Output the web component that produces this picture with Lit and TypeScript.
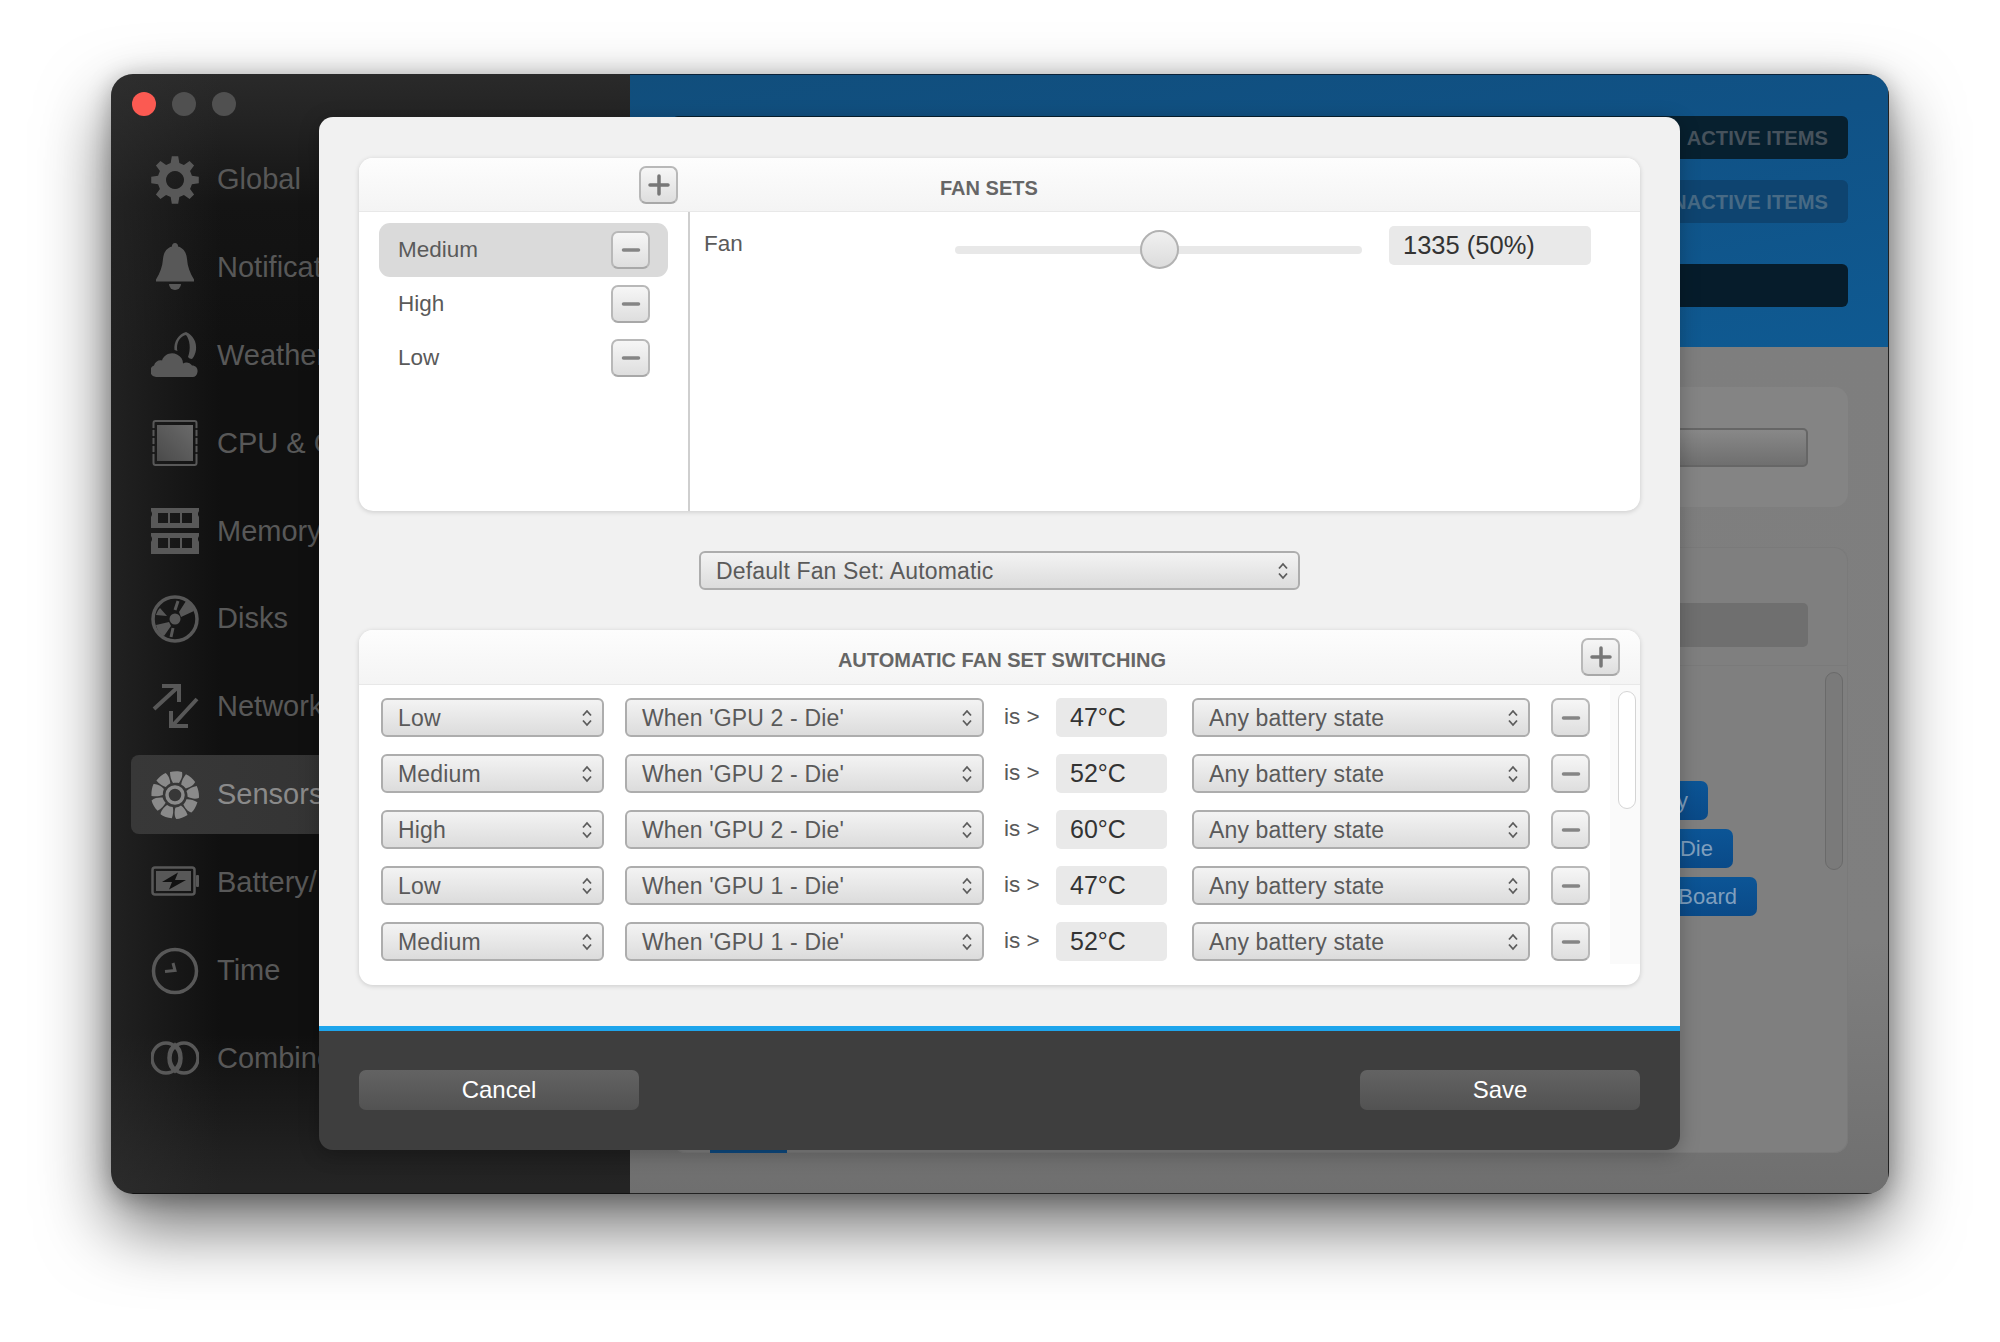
import { LitElement, html, css, svg } from "lit";
import { customElement } from "lit/decorators.js";
import { styleMap } from "lit/directives/style-map.js";

const gearPath = (() => {
  const teeth = 8, cx = 24, cy = 24, ro = 24, ri = 17.5;
  let d = "";
  for (let i = 0; i < teeth; i++) {
    const a = (i / teeth) * Math.PI * 2 - Math.PI / 2;
    const s = (Math.PI * 2) / teeth;
    const pts: [number, number][] = [
      [ri, a - s * 0.32],
      [ro, a - s * 0.17],
      [ro, a + s * 0.17],
      [ri, a + s * 0.32],
    ];
    for (const [r, t] of pts) {
      const x = (cx + r * Math.cos(t)).toFixed(2);
      const y = (cy + r * Math.sin(t)).toFixed(2);
      d += (d ? "L" : "M") + x + " " + y + " ";
    }
  }
  return d + "Z M24 15a9 9 0 1 0 0.01 0Z";
})();

const icons: Record<string, unknown> = {
  gear: svg`<path d=${gearPath} fill="currentColor" fill-rule="evenodd"/>`,
  bell: svg`<path fill="currentColor" d="M24 0a3 3 0 0 1 3 3.400c6 1.600 8.500 6.600 9 12.600.6 8 3 14 7 20.500v2H5v-2c4-6.500 6.400-12.500 7-20.500.5-6 3-11 9-12.600A3 3 0 0 1 24 0Z"/><path fill="currentColor" d="M18 41h12a6 6 0 0 1-12 0Z"/>`,
  weather: svg`<path fill="currentColor" d="M35 1c7 3 11 10 10 18-.5 3-2 7-4 9-2 0-3-1-4-2 3-8 2-17-2-22-5 1-9 6-9 13 0 1 0 2 .5 3l-3-1c-1-8 4-16 11.500-18Z"/><path fill="currentColor" d="M5 46a6 6 0 0 1-2-11.500c1-4 5-6 8-5 2-6 9-9 15-6 4 2 6 5 6 9 3-2 7-1 9 2 4 0 6 3 5.500 6.500S44 46 42 46Z"/>`,
  cpu: svg`<defs><linearGradient id="cg" x1="0" x2="1" y1="1" y2="0"><stop offset="0" stop-color="#4a4a4a"/><stop offset="1" stop-color="#6a6a6a"/></linearGradient></defs><rect x="2.500" y="2" width="43" height="44" rx="2" fill="none" stroke="currentColor" stroke-width="2"/><rect x="6" y="6" width="36" height="36" fill="url(#cg)"/><path stroke="#111" stroke-width="1.500" d="M1 10h3M1 18h3M1 26h3M1 34h3M44 10h3M44 18h3M44 26h3M44 34h3"/>`,
  ram: svg`<g fill="currentColor" fill-rule="evenodd"><path d="M0 1h48v3l-1 2v2l1 2v11H0V10l1-2V6L0 4Zm7 5v10h10V6Zm12 0v10h10V6Zm12 0v10h10V6Z"/><path d="M0 26h48v3l-1 2v2l1 2v12H0V35l1-2v-2l-1-2Zm7 5v10h10V31Zm12 0v10h10V31Zm12 0v10h10V31Z"/></g>`,
  disk: svg`<circle cx="24" cy="24" r="22" fill="none" stroke="currentColor" stroke-width="3.500"/><circle cx="24" cy="24" r="5.500" fill="currentColor"/><path fill="currentColor" d="M28 17l7-11c4 2 7 6 8 10l-13 6ZM20 31l-7 10c-4-2-7-6-8-11l13-3ZM16 21L5 20c1-3 2-5 4-7Z"/><path stroke="currentColor" stroke-width="3" d="M27 6l-3 9M22 33l-2 9"/>`,
  net: svg`<g fill="none" stroke="currentColor" stroke-width="4"><path d="M3 26L27 4M11 3h17v16"/><path d="M46 16L22 42M37 43H20V28"/></g>`,
  fan: svg`<g fill="currentColor">${[0, 1, 2, 3, 4, 5, 6, 7, 8].map(
    (i) =>
      svg`<path transform="rotate(${i * 40} 24 24)" d="M19 1c4-1 9-1 12 0 1 4-1 8-3 11-2-.5-4-.5-6 0-2-3-3-7-3-11Z"/>`
  )}</g><circle cx="24" cy="24" r="8" fill="none" stroke="currentColor" stroke-width="3.500"/>`,
  battery: svg`<rect x="1.500" y="8.500" width="42" height="27" rx="2.500" fill="none" stroke="currentColor" stroke-width="2.500"/><rect x="5" y="12" width="35" height="20" fill="currentColor"/><rect x="45" y="16" width="3" height="12" rx="1" fill="currentColor"/><path fill="#111" d="M27 13.500L11 23h10l-3 7.500L35 21H24Z"/>`,
  clock: svg`<circle cx="24" cy="24" r="21.500" fill="none" stroke="currentColor" stroke-width="3.500"/><path fill="none" stroke="currentColor" stroke-width="3" d="M22 16l2 7.500-10 1"/>`,
  rings: svg`<g fill="none" stroke="currentColor" stroke-width="3.500"><ellipse cx="15" cy="24" rx="14" ry="15"/><ellipse cx="33" cy="24" rx="14" ry="15"/><path d="M25 10c-5 3-7 9-7 14s2 11 7 14M23 10c5 3 7 9 7 14s-2 11-7 14"/></g>`,
};

const chevrons = html`<svg class="chev" viewBox="0 0 12 20" width="12" height="20">
  <path d="M2 7.500L6 3l4 4.500M2 12.500L6 17l4-4.500" fill="none" stroke="#5c5c5c" stroke-width="1.800" />
</svg>`;

const nav = [
  ["Global", "gear"],
  ["Notifications", "bell"],
  ["Weather", "weather"],
  ["CPU & GPU", "cpu"],
  ["Memory", "ram"],
  ["Disks", "disk"],
  ["Network", "net"],
  ["Sensors", "fan"],
  ["Battery/Power", "battery"],
  ["Time", "clock"],
  ["Combined", "rings"],
];

const rules = [
  ["Low", "When 'GPU 2 - Die'", "47°C"],
  ["Medium", "When 'GPU 2 - Die'", "52°C"],
  ["High", "When 'GPU 2 - Die'", "60°C"],
  ["Low", "When 'GPU 1 - Die'", "47°C"],
  ["Medium", "When 'GPU 1 - Die'", "52°C"],
];

const tags = [
  ["Battery", 347],
  ["GPU 2 - Die", 372],
  ["Logic Board", 396],
] as const;

@customElement("app-root")
export class AppRoot extends LitElement {
  static styles = css`
    :host {
      display: block;
      width: 2000px;
      height: 1342px;
      box-sizing: border-box;
      padding: 74px 111px 148px;
      background: #fff;
      font-family: "Liberation Sans", Arial, sans-serif;
      overflow: hidden;
    }
    * { box-sizing: border-box; }
    .window {
      position: relative;
      height: 100%;
      display: flex;
      border-radius: 22px;
      overflow: hidden;
      box-shadow: 0 32px 70px rgba(0,0,0,.58), 0 4px 24px rgba(0,0,0,.28);
    }
    .sidebar {
      width: 519px;
      flex: none;
      background:
        linear-gradient(90deg, rgba(50,50,50,.5) 0, rgba(50,50,50,0) 110px),
        linear-gradient(180deg, #2a2a2a 0, #242424 40px, #141414 130px, #101010 300px, #101010 960px, #242424 1110px);
      padding-top: 18px;
      border-bottom: 1px solid #111;
    }
    .lights { display: flex; gap: 16px; padding-left: 21px; height: 48px; }
    .light { width: 24px; height: 24px; border-radius: 50%; background: #505050; }
    .light.red { background: #fb5a52; }
    .navlist { display: flex; flex-direction: column; gap: 8.900px; }
    .item {
      display: flex;
      align-items: center;
      height: 79px;
      margin-left: 20px;
      padding-left: 20px;
      gap: 18px;
      color: #585858;
      font-size: 29px;
      border-radius: 8px 0 0 8px;
      white-space: nowrap;
      flex: none;
    }
    .item.active { color: #8a8a8a; background: linear-gradient(90deg, #383838, #2e2e2e); }
    .item svg { width: 48px; height: 48px; flex: none; }
    .main {
      flex: 1;
      display: flex;
      flex-direction: column;
      min-width: 0;
      background: #7f7f7f;
      border-top: 1px solid #0b2238;
      border-right: 1px solid #222;
      border-bottom: 1px solid #222;
    }
    .head {
      height: 272px;
      flex: none;
      background: linear-gradient(170deg, #114e7c 0, #105286 50%, #0f5a92 100%);
      padding: 41px 40px 0 42px;
    }
    .seg {
      height: 43px;
      border-radius: 6px;
      background: #07202f;
      color: #46525c;
      font-weight: 700;
      font-size: 20.200px;
      display: flex;
      align-items: center;
      justify-content: flex-end;
      padding: 2px 20px 0 0;
    }
    .seg.off { background: #0e4470; color: #476a85; margin-top: 21px; }
    .seg.bar { background: #061c2b; margin-top: 41px; }
    .content {
      flex: 1;
      display: flex;
      flex-direction: column;
      gap: 40px;
      padding: 40px 40px 40px 42px;
      background: linear-gradient(180deg, #7e7e7e 0, #7f7f7f 70%, #6f6f6f 100%);
    }
    .card {
      height: 120px;
      flex: none;
      background: #848484;
      border-radius: 14px;
      padding: 41px 40px 0;
    }
    .field {
      height: 39px;
      border-radius: 5px;
      border: 2px solid #666;
      background: linear-gradient(180deg, #888, #6f6f6f);
    }
    .card2 {
      flex: 1;
      background: #7f7f7f;
      border-radius: 14px;
      position: relative;
      box-shadow: inset 0 0 0 1px #7a7a7a;
    }
    .card2top { height: 119px; padding: 56px 40px 0; border-bottom: 1px solid #7a7a7a; }
    .field2 { height: 44px; border-radius: 5px; background: #6f6f6f; }
    .taglist { display: flex; flex-direction: column; gap: 9px; margin-top: 115px; }
    .tag {
      height: 39px;
      border-radius: 7px;
      background: linear-gradient(180deg, #0c5596, #0a4a88);
      color: #7f9fbe;
      font-size: 22px;
      display: flex;
      align-items: center;
      justify-content: flex-end;
      padding-right: 20px;
    }
    .thumb {
      position: absolute;
      right: 5px;
      top: 125px;
      width: 18px;
      height: 198px;
      border-radius: 9px;
      border: 1px solid #6a6a6a;
      background: #7a7a7a;
    }
    .tab {
      position: absolute;
      left: 38px;
      bottom: 0;
      width: 77px;
      height: 6px;
      background: #0e4a80;
    }
    /* modal */
    .modal {
      position: absolute;
      left: 208px;
      top: 43px;
      width: 1361px;
      height: 1033px;
      border-radius: 14px;
      overflow: hidden;
      display: flex;
      flex-direction: column;
      box-shadow: 0 4px 20px rgba(0,0,0,.25);
    }
    .mbody {
      height: 909px;
      flex: none;
      background: #f1f1f1;
      padding: 41px 40px 0 40px;
      display: flex;
      flex-direction: column;
    }
    .panel {
      background: #fff;
      border-radius: 14px;
      box-shadow: 0 1px 5px rgba(0,0,0,.16);
      overflow: hidden;
      flex: none;
    }
    .phead {
      display: flex;
      align-items: center;
      height: 54px;
      background: linear-gradient(180deg, #fdfdfd, #f4f4f4);
      border-bottom: 1px solid #e8e8e8;
    }
    .ptitle { font-weight: 700; font-size: 20px; color: #666; white-space: nowrap; }
    .fs-plus { margin-left: 280px; }
    .fs-title { margin-left: 262px; padding-top: 8px; }
    .auto-title { flex: 1; text-align: center; padding: 7px 0 0 64px; }
    .auto-plus { margin-right: 20px; }
    .ibtn {
      width: 39px;
      height: 38px;
      flex: none;
      display: flex;
      align-items: center;
      justify-content: center;
      border-radius: 7px;
      border: 2px solid #b8b8b8;
      border-bottom-color: #a8a8a8;
      background: linear-gradient(180deg, #f6f6f6, #dedede);
    }
    .ibtn svg { width: 24px; height: 24px; display: block; }
    .fanbody { display: flex; height: 299px; }
    .fanlist {
      width: 331px;
      flex: none;
      padding: 11px 20px 0 20px;
      border-right: 2px solid #cfcfcf;
    }
    .fanrow {
      height: 54px;
      display: flex;
      align-items: center;
      justify-content: space-between;
      padding: 0 18px 0 19px;
      border-radius: 11px;
      font-size: 22.500px;
      color: #5a5a5a;
    }
    .fanrow.sel { background: #dadada; }
    .fandetail {
      flex: 1;
      display: flex;
      align-items: flex-start;
      padding: 14px 0 0 14px;
      font-size: 22.500px;
      color: #5a5a5a;
    }
    .fanlabel { width: 251px; line-height: 36px; flex: none; }
    .slider {
      width: 407px;
      flex: none;
      height: 39px;
      margin-top: 4px;
      position: relative;
      display: flex;
      align-items: center;
    }
    .track { width: 100%; height: 8px; border-radius: 4px; background: #e8e8e8; }
    .knob {
      position: absolute;
      left: 185px;
      top: 0;
      width: 39px;
      height: 39px;
      border-radius: 50%;
      background: linear-gradient(180deg, #f0f0f0, #dcdcdc);
      border: 2px solid #b2b2b2;
    }
    .val {
      background: #e9e9e9;
      border-radius: 5px;
      color: #333;
      display: flex;
      align-items: center;
      font-size: 25.500px;
    }
    .fanval { width: 202px; height: 39px; margin-left: 27px; padding-left: 14px; }
    .sel-box {
      height: 39px;
      display: flex;
      align-items: center;
      justify-content: space-between;
      border-radius: 6px;
      border: 2px solid #adadad;
      background: linear-gradient(180deg, #f3f3f3, #dcdcdc);
      color: #5a5a5a;
      font-size: 23px;
      letter-spacing: .15px;
      padding: 1px 9px 0 15px;
      flex: none;
      white-space: nowrap;
    }
    .chev { flex: none; }
    .default { width: 601px; margin: 40px 0; align-self: center; }
    .autohead { height: 55px; }
    .autobody { display: flex; height: 300px; }
    .rows { flex: 1; padding: 13px 0 0 22px; display: flex; flex-direction: column; gap: 17px; }
    .rule { display: flex; align-items: center; height: 39px; }
    .w1 { width: 223px; }
    .w2 { width: 359px; margin-left: 21px; }
    .is { width: 72px; padding-left: 20px; font-size: 22.500px; color: #5a5a5a; flex: none; padding-bottom: 2px; }
    .temp { width: 111px; height: 39px; padding-left: 14px; font-size: 25px; flex: none; }
    .w3 { width: 338px; margin-left: 25px; }
    .rule .ibtn { margin-left: 21px; height: 39px; }
    .scroller {
      width: 30px;
      flex: none;
      height: 279px;
      background: #fafafa;
      padding: 6px 4px 0 8px;
    }
    .sthumb {
      width: 18px;
      height: 118px;
      border-radius: 9px;
      border: 1.500px solid #d4d4d4;
      background: #fff;
    }
    .footer {
      flex: 1;
      border-top: 5px solid #1ea5ec;
      background: #3e3e3e;
      display: flex;
      justify-content: space-between;
      padding: 39px 40px 0 40px;
    }
    .fbtn {
      width: 280px;
      height: 40px;
      border-radius: 7px;
      background: linear-gradient(180deg, #636363, #525252);
      color: #fff;
      font-size: 24px;
      display: flex;
      align-items: center;
      justify-content: center;
    }
  `;

  private minus() {
    return html`<div class="ibtn"><svg viewBox="0 0 24 24"><path d="M4.500 12h15" stroke="#858585" stroke-width="3.500" stroke-linecap="round"/></svg></div>`;
  }
  private plus() {
    return html`<div class="ibtn"><svg viewBox="0 0 24 24"><path d="M3 12h18M12 3v18" stroke="#777" stroke-width="3.500" stroke-linecap="round"/></svg></div>`;
  }

  render() {
    return html`
      <div class="window">
        <aside class="sidebar">
          <div class="lights">
            <div class="light red"></div>
            <div class="light"></div>
            <div class="light"></div>
          </div>
          <div class="navlist">
            ${nav.map(
              ([label, ic]) => html`<div class="item ${label === "Sensors" ? "active" : ""}">
                <svg viewBox="0 0 48 48">${icons[ic]}</svg><span>${label}</span>
              </div>`
            )}
          </div>
        </aside>
        <section class="main">
          <div class="head">
            <div class="seg">ACTIVE ITEMS</div>
            <div class="seg off">INACTIVE ITEMS</div>
            <div class="seg bar"></div>
          </div>
          <div class="content">
            <div class="card"><div class="field"></div></div>
            <div class="card2">
              <div class="card2top"><div class="field2"></div></div>
              <div class="taglist">
                ${tags.map(
                  ([t, w]) => html`<div class="tag" style=${styleMap({ marginLeft: "689px", width: w + "px" })}>${t}</div>`
                )}
              </div>
              <div class="thumb"></div>
              <div class="tab"></div>
            </div>
          </div>
        </section>
        <div class="modal">
          <div class="mbody">
            <div class="panel">
              <div class="phead">
                <div class="fs-plus">${this.plus()}</div>
                <div class="ptitle fs-title">FAN SETS</div>
              </div>
              <div class="fanbody">
                <div class="fanlist">
                  <div class="fanrow sel"><span>Medium</span>${this.minus()}</div>
                  <div class="fanrow"><span>High</span>${this.minus()}</div>
                  <div class="fanrow"><span>Low</span>${this.minus()}</div>
                </div>
                <div class="fandetail">
                  <div class="fanlabel">Fan</div>
                  <div class="slider"><div class="track"></div><div class="knob"></div></div>
                  <div class="val fanval">1335 (50%)</div>
                </div>
              </div>
            </div>
            <div class="sel-box default"><span>Default Fan Set: Automatic</span>${chevrons}</div>
            <div class="panel">
              <div class="phead autohead">
                <div class="ptitle auto-title">AUTOMATIC FAN SET SWITCHING</div>
                <div class="auto-plus">${this.plus()}</div>
              </div>
              <div class="autobody">
                <div class="rows">
                  ${rules.map(
                    ([a, b, c]) => html`<div class="rule">
                      <div class="sel-box w1"><span>${a}</span>${chevrons}</div>
                      <div class="sel-box w2"><span>${b}</span>${chevrons}</div>
                      <div class="is">is &gt;</div>
                      <div class="val temp">${c}</div>
                      <div class="sel-box w3"><span>Any battery state</span>${chevrons}</div>
                      ${this.minus()}
                    </div>`
                  )}
                </div>
                <div class="scroller"><div class="sthumb"></div></div>
              </div>
            </div>
          </div>
          <div class="footer">
            <div class="fbtn">Cancel</div>
            <div class="fbtn">Save</div>
          </div>
        </div>
      </div>
    `;
  }
}
